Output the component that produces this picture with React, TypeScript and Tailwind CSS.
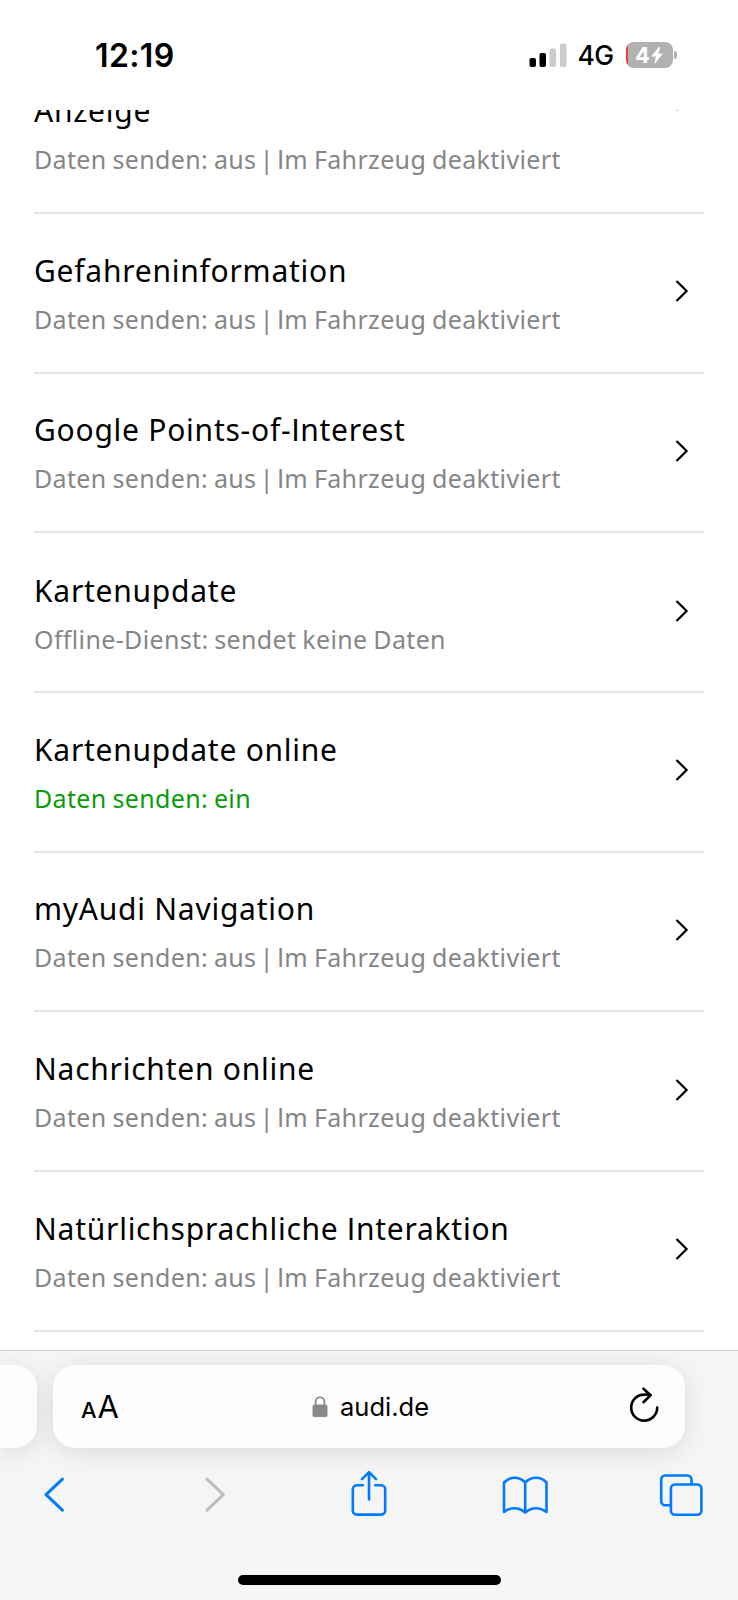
import { Fragment } from 'react';

interface Service {
  name: string;
  status: string[];
  active?: boolean;
}

const OFF = ['Daten senden: aus', 'Im Fahrzeug deaktiviert'];

const services: Service[] = [
  { name: 'Gefahreninformation', status: OFF },
  { name: 'Google Points-of-Interest', status: OFF },
  { name: 'Kartenupdate', status: ['Offline-Dienst: sendet keine Daten'] },
  { name: 'Kartenupdate online', status: ['Daten senden: ein'], active: true },
  { name: 'myAudi Navigation', status: OFF },
  { name: 'Nachrichten online', status: OFF },
  { name: 'Natürlichsprachliche Interaktion', status: OFF },
];

function StatusBar() {
  return (
    <header className="flex h-[110px] shrink-0 items-start justify-between bg-white pl-[95px] pr-[61px] pt-9">
      <span className="pt-px text-[32px] leading-[38px] font-semibold tracking-[0.4px]">12:19</span>
      <div className="flex h-[38px] items-center">
        <svg width="38" height="24" viewBox="0 0 38 24" className="mr-[11px]">
          <rect x="0.5" y="15" width="6.5" height="9" rx="2" fill="#000" />
          <rect x="10.5" y="10" width="6.5" height="14" rx="2" fill="#000" />
          <rect x="20.5" y="5.5" width="6.5" height="18.5" rx="2" fill="#cbcbcb" />
          <rect x="31" y="0.5" width="6.5" height="23.5" rx="2" fill="#cbcbcb" />
        </svg>
        <span className="mr-[11px] w-[37px] text-[26.5px] leading-[38px] font-medium tracking-[-0.6px]">4G</span>
        <div className="flex items-center gap-[1.5px]">
          <div className="flex h-[26px] w-[47px] items-center justify-center overflow-hidden rounded-[8px] bg-linear-to-r from-[#ff3b30] from-[2px] to-[#b1b1b1] to-[2px]">
            <span className="text-[22px] leading-none font-bold text-white">4</span>
            <svg width="12" height="18" viewBox="0 0 11 17" className="ml-px" fill="#fff">
              <path d="M7.5 0.8 0.6 9.2c-.3.4-.1.8.3.8h3.7L3 15.8c-.1.6.5.8.9.4l6.6-8.4c.3-.4.1-.8-.3-.8H6.7l1.7-5.7c.1-.6-.5-.9-.9-.5z" />
            </svg>
          </div>
          <div className="h-[8px] w-[3px] rounded-r-full bg-[#b1b1b1]" />
        </div>
      </div>
    </header>
  );
}

// Noto Sans draws the capital I with serifs, so that letter is taken from Inter
function Label({ text }: { text: string }) {
  return text.split(/(I)/).map((part, i) =>
    part === 'I' ? <span key={i} className="font-['Inter',sans-serif]">I</span> : <Fragment key={i}>{part}</Fragment>
  );
}

function ServiceText({ name, status, active }: Service) {
  return (
    <>
      <h2 className="text-[30px] leading-[48px] tracking-[0.75px] whitespace-nowrap">
        <Label text={name} />
      </h2>
      <p className={`text-[25px] leading-[48px] tracking-[0.35px] [word-spacing:-1px] whitespace-nowrap ${active ? 'text-[#0a9b0a]' : 'text-[#868686]'}`}>
        {status.map((part, i) => (
          <Fragment key={part}>
            {i > 0 && <span className="-mx-[2.5px]"> | </span>}
            <Label text={part} />
          </Fragment>
        ))}
      </p>
    </>
  );
}

function RowChevron() {
  return (
    <svg width="14" height="22" viewBox="0 0 14 22" className="mr-[15px] mb-[3px] shrink-0" fill="none" stroke="#000" strokeWidth="2.2">
      <path d="M1.5 1 11.6 11 1.5 21" />
    </svg>
  );
}

function ServiceRow(props: Service) {
  return (
    <li className="flex h-[159.67px] shrink-0 items-center justify-between border-b-2 border-[#e3e3e3]">
      <div className="pt-[5px]">
        <ServiceText {...props} />
      </div>
      <RowChevron />
    </li>
  );
}

function AddressBar() {
  return (
    <div className="flex gap-4 pt-[14px]">
      <div className="h-[83px] w-[37px] rounded-r-[22px] bg-[#fdfdfd] shadow-[0_4px_24px_rgba(0,0,0,0.11)]" />
      <div className="flex h-[83px] w-[632px] items-center justify-between rounded-[22px] bg-[#fdfdfd] pr-[26px] pl-[28px] shadow-[0_4px_24px_rgba(0,0,0,0.11)]">
        <div className="flex items-baseline gap-px pt-[2px]">
          <span className="text-[22px] font-medium">A</span>
          <span className="text-[31px]">A</span>
        </div>
        <div className="flex items-center gap-3 pr-[7px]">
          <svg width="16" height="22" viewBox="0 0 16 22">
            <rect x="0.5" y="8.5" width="15" height="12.5" rx="2.2" fill="#8a8a8e" />
            <path d="M3.6 10V6a4.4 4.8 0 0 1 8.8 0V10" fill="none" stroke="#8a8a8e" strokeWidth="1.8" />
          </svg>
          <span className="text-[25.5px] leading-8">audi.de</span>
        </div>
        <svg width="30" height="36" viewBox="0 0 30 36" className="mb-1" fill="none" stroke="#000" strokeWidth="2.6" strokeLinecap="round" strokeLinejoin="round">
          <path d="M28.2 20.5A13 13 0 1 1 15.2 7.6Q18.5 7.2 21.3 8.1" />
          <path d="M14.5 1.7 21.5 8.3 14.5 15.2" />
        </svg>
      </div>
    </div>
  );
}

function Toolbar() {
  return (
    <nav className="mt-[22px] flex justify-between pr-[33px] pl-[30px] text-[#007aff] [&>svg]:size-12 [&>svg]:fill-none [&>svg]:stroke-current">
      <svg viewBox="0 0 48 48" strokeWidth="3" strokeLinecap="round" strokeLinejoin="round">
        <path d="M32.4 9.1 16 24.6 32.4 40.1" />
      </svg>
      <svg viewBox="0 0 48 48" strokeWidth="3" strokeLinecap="round" strokeLinejoin="round" className="text-[#bdbdbf]">
        <path d="M20 9.1 36.4 24.6 20 40.1" />
      </svg>
      <svg viewBox="0 0 48 48" strokeWidth="2.6" strokeLinecap="round" strokeLinejoin="round">
        <path d="M18.8 15.2H12.8a4 4 0 0 0-4 4V40.6a4 4 0 0 0 4 4h24.4a4 4 0 0 0 4-4V19.2a4 4 0 0 0-4-4H31.2" />
        <path d="M25 29.5V2.6M18 9.2 25 2.2 32 9.2" />
      </svg>
      <svg viewBox="0 0 48 48" strokeWidth="2.6" strokeLinejoin="round">
        <path d="M25.2 12.5Q20.5 7.8 14.5 7.8T4 12.5V42Q9 38.3 14.5 38.3T25.2 42.5Q30.5 38.3 36 38.3T46.5 42V12.5Q42 7.8 36 7.8T25.2 12.5V42.5" />
      </svg>
      <svg viewBox="0 0 48 48" strokeWidth="2.6">
        <path d="M13.9 35.3H8.2a4 4 0 0 1-4-4V9.5a4 4 0 0 1 4-4H30.5a4 4 0 0 1 4 4V14.5" />
        <rect x="13.9" y="14.5" width="30.5" height="30.2" rx="4" />
      </svg>
    </nav>
  );
}

export default function App() {
  return (
    <div className="flex h-[1600px] w-[738px] flex-col overflow-hidden bg-white font-['Inter',sans-serif] text-black">
      <StatusBar />
      <main className="flex h-[1240px] shrink-0 flex-col overflow-hidden px-[34px] font-['Noto_Sans',sans-serif]">
        {/* first entry is scrolled halfway under the status bar */}
        <ul className="-mt-[119px] flex flex-col">
          <li className="flex h-[223px] shrink-0 items-center justify-between border-b-2 border-[#e3e3e3]">
            <div className="self-end pb-7">
              <ServiceText name="Anzeige" status={OFF} />
            </div>
            <RowChevron />
          </li>
          {services.map((s) => (
            <ServiceRow key={s.name} {...s} />
          ))}
        </ul>
      </main>
      <footer className="flex h-[250px] shrink-0 flex-col overflow-hidden border-t border-[#cdcdd0] bg-[#f5f5f6]">
        <AddressBar />
        <Toolbar />
        <div className="mt-[57px] ml-[238px] h-[10px] w-[263px] rounded-full bg-black" />
      </footer>
    </div>
  );
}
